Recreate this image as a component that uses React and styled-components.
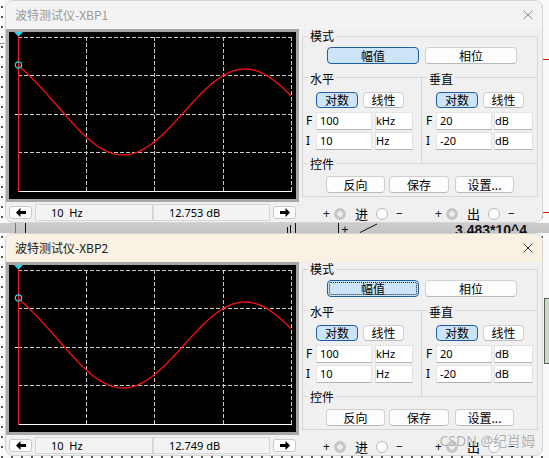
import React from "react";
import styled, { createGlobalStyle } from "styled-components";

const UI = `"Noto Sans", "Noto Sans CJK SC", sans-serif`;
const CJK = `"Noto Sans CJK SC", "Noto Sans", sans-serif`;

const GRID_X = [77, 145, 214, 282];
const GRID_Y = [5, 43, 82, 120];

// magnitude response, roughly a sine in log-frequency with a steeper start
function response(x) {
  const base = 80 - 43 * Math.cos((Math.PI * (x + 8)) / 122);
  return base - 8 * Math.exp(-(x - 9) / 18);
}

function curvePoints() {
  const pts = [];
  for (let x = 9; x <= 282; x += 1.5) pts.push(`${x.toFixed(1)},${response(x).toFixed(2)}`);
  return pts.join(" ");
}

const CURVE = curvePoints();

const GlobalStyle = createGlobalStyle`
  html, body { margin: 0; padding: 0; }
  body { width: 549px; height: 458px; overflow: hidden; font-family: ${UI}; }
`;

const Page = styled.div`
  position: relative;
  width: 549px;
  height: 458px;
  overflow: hidden;
  background-color: #fafafa;
  background-image: radial-gradient(circle, #555 0.7px, transparent 1.1px);
  background-size: 10px 10px;
  background-position: -3px 2px;
`;

const Backdrop = styled.svg`
  position: absolute;
  left: 0;
  top: 0;
  z-index: 0;
`;

const Window = styled.div`
  position: relative;
  z-index: 1;
  box-sizing: border-box;
  width: 538px;
  height: 223px;
  margin-left: 5px;
  border: 1px solid #d4d4d4;
  border-radius: 8px;
  background: #f0f0f0;
  overflow: hidden;
`;

const TitleBar = styled.div`
  display: flex;
  align-items: center;
  justify-content: space-between;
  height: 28px;
  padding: 0 9px;
  background: ${(p) => (p.$active ? "#f9f1e2" : "#f3f3f3")};
`;

const Title = styled.span`
  font: 12px/1 ${CJK};
  color: ${(p) => (p.$active ? "#1a1a1a" : "#9a9a9a")};
`;

const Body = styled.div`
  display: flex;
`;

const LeftCol = styled.div`
  display: flex;
  flex-direction: column;
  width: 293px;
`;

const Screen = styled.div`
  height: 167px;
  border: 3px solid #a7a7a7;
  background: #000;
  line-height: 0;
`;

const ReadoutBar = styled.div`
  display: flex;
  align-items: center;
  height: 18px;
  margin-top: 1px;
  padding-left: 3px;
`;

const ArrowButton = styled.div`
  box-sizing: border-box;
  display: flex;
  align-items: center;
  justify-content: center;
  width: 23px;
  height: 13px;
  background: #fdfdfd;
  border: 1px solid #c9c9c9;
  border-radius: 3px;
  margin: ${(p) => (p.$right ? "0 0 0 3px" : "0 3px 0 0")};
`;

const Readout = styled.div`
  box-sizing: border-box;
  width: ${(p) => p.$w}px;
  height: 17px;
  padding-left: 15px;
  border: 1px solid #d6d6d6;
  background: #f3f3f3;
  font: 11px/15px ${UI};
  color: #000;
  white-space: pre;
`;

const Controls = styled.div`
  display: flex;
  flex-direction: column;
  width: 236px;
  margin-left: 3px;
`;

const GroupBox = styled.div`
  box-sizing: border-box;
  height: 161px;
  margin-top: 7px;
  border: 1px solid #d6d6d6;
  display: flex;
  flex-direction: column;
`;

const ModeSection = styled.div`
  display: flex;
  flex-direction: column;
  height: 40px;
`;

const AxisSection = styled.div`
  display: flex;
  height: 85px;
  border-top: 1px solid #d6d6d6;
`;

const Half = styled.div`
  box-sizing: border-box;
  display: flex;
  flex-direction: column;
  width: ${(p) => (p.$divider ? "119px" : "auto")};
  flex: ${(p) => (p.$divider ? "none" : "1")};
  border-right: ${(p) => (p.$divider ? "1px solid #d6d6d6" : "none")};
`;

const CtrlSection = styled.div`
  display: flex;
  flex-direction: column;
  height: 32px;
  border-top: 1px solid #d6d6d6;
`;

const Legend = styled.span`
  align-self: flex-start;
  margin: ${(p) => p.$top}px 0 0 5px;
  padding: 0 2px;
  background: #f0f0f0;
  font: 12px/14px ${CJK};
  color: #000;
`;

const ButtonRow = styled.div`
  display: flex;
  gap: ${(p) => p.$gap}px;
  margin-top: ${(p) => p.$top}px;
  padding-left: ${(p) => p.$pad}px;
`;

const Btn = styled.button`
  box-sizing: border-box;
  width: ${(p) => p.$w}px;
  height: ${(p) => p.$h || 17}px;
  margin: 0;
  margin-left: ${(p) => p.$ml || 0}px;
  padding: 0;
  font: 12px/1 ${CJK};
  color: #000;
  background: ${(p) => (p.$on ? "#cce4f7" : "#fdfdfd")};
  border: 1px solid ${(p) => (p.$on ? "#1f5ea6" : "#d0d0d0")};
  border-bottom-color: ${(p) => (p.$on ? "#1f5ea6" : "#bababa")};
  border-radius: 4px;
  ${(p) => p.$focus && "outline: 1px dotted #222; outline-offset: -3px;"}
`;

const FieldRow = styled.div`
  display: flex;
  align-items: center;
  margin-top: ${(p) => p.$top}px;
  padding-left: ${(p) => p.$pad}px;
  gap: ${(p) => p.$gap}px;
`;

const FieldLabel = styled.span`
  width: 10px;
  margin-right: ${(p) => -p.$gap}px;
  font: 12px/18px ${UI};
  color: #000;
`;

const Field = styled.div`
  box-sizing: border-box;
  width: ${(p) => p.$w}px;
  height: 18px;
  padding: ${(p) => (p.$unit ? "0 0 2px" : "0")} 0 0 ${(p) => p.$pad}px;
  background: #fff;
  border: 1px solid #e3e3e3;
  border-bottom-color: #b4b4b4;
  font: 11px/16px ${UI};
  color: #000;
`;

const Terminals = styled.div`
  display: flex;
  align-items: center;
  height: 16px;
  margin-top: 9px;
  padding-left: 21px;
`;

const Term = styled.div`
  display: flex;
  align-items: center;
  margin-left: ${(p) => p.$ml || 0}px;
`;

const Sign = styled.span`
  width: 6px;
  margin-left: ${(p) => p.$ml || 0}px;
  text-align: center;
  font: 12px/16px ${UI};
  color: #111;
`;

const Port = styled.span`
  margin-left: 9px;
  font: 13px/16px ${CJK};
  color: #000;
`;

const Radio = styled.span`
  box-sizing: border-box;
  width: 12px;
  height: 12px;
  margin-left: ${(p) => p.$ml}px;
  border-radius: 50%;
  background: ${(p) =>
    p.$on ? "radial-gradient(circle, #ececec 0 2.6px, #c6c6c6 3px)" : "#fdfdfd"};
  border: 1px solid ${(p) => (p.$on ? "#c6c6c6" : "#bdbdbd")};
`;

const Strip = styled.div`
  position: relative;
  z-index: 1;
  height: 10px;
  background: linear-gradient(#cdcdcd, #c4c4c4);
  overflow: hidden;
  line-height: 0;
`;

const NodeLabel = styled.span`
  position: absolute;
  left: 455px;
  top: 0;
  font: bold 14px/14px "Liberation Sans", Arial, sans-serif;
  color: #111;
  white-space: nowrap;
`;

const Watermark = styled.span`
  position: absolute;
  right: 14px;
  bottom: 9px;
  z-index: 3;
  font: 14px/16px ${UI};
  color: rgba(150, 150, 150, 0.75);
  text-shadow: 0 0 1px rgba(255, 255, 255, 0.8);
`;

function CloseIcon({ color }) {
  return (
    <svg width="10" height="10" viewBox="0 0 10 10">
      <path d="M0.5 0.5 L9.5 9.5 M9.5 0.5 L0.5 9.5" stroke={color} strokeWidth="1" />
    </svg>
  );
}

function Arrow({ right }) {
  return (
    <svg width="10" height="9" viewBox="0 0 10 9">
      <path
        d="M0 4.5 L4.5 0 V3 H10 V6 H4.5 V9 Z"
        fill="#000"
        transform={right ? "translate(10 0) scale(-1 1)" : undefined}
      />
    </svg>
  );
}

function Scope() {
  return (
    <Screen>
      <svg width="287" height="167" viewBox="0 0 287 167">
        {GRID_Y.map((y) => (
          <line key={y} x1="9" x2="283" y1={y + 0.5} y2={y + 0.5} stroke="#c8c8c8" strokeDasharray="4 2" />
        ))}
        {GRID_X.map((x) => (
          <line key={x} x1={x + 0.5} x2={x + 0.5} y1="5" y2="159" stroke="#c8c8c8" strokeDasharray="4 2" />
        ))}
        <line x1="6" x2="10" y1="82.5" y2="82.5" stroke="#fff" />
        <line x1="9" x2="283" y1="159.5" y2="159.5" stroke="#fff" />
        <polyline points={CURVE} fill="none" stroke="#ff1010" strokeWidth="1.3" strokeLinejoin="round" />
        <line x1="9.5" x2="9.5" y1="0" y2="160" stroke="#ff1a1a" strokeWidth="1.2" />
        <path d="M5 0 H14 L9.5 4.5 Z" fill="#2ad4e6" />
        <circle cx="9.5" cy="33" r="3.2" fill="none" stroke="#2ad4e6" strokeWidth="1.2" />
      </svg>
    </Screen>
  );
}

function Bode({ title, active, gain }) {
  return (
    <Window>
      <TitleBar $active={active}>
        <Title $active={active}>{title}</Title>
        <CloseIcon color={active ? "#333" : "#8e8e8e"} />
      </TitleBar>
      <Body>
        <LeftCol>
          <Scope />
          <ReadoutBar>
            <ArrowButton>
              <Arrow />
            </ArrowButton>
            <Readout $w={118}>10  Hz</Readout>
            <Readout $w={117}>{gain}</Readout>
            <ArrowButton $right>
              <Arrow right />
            </ArrowButton>
          </ReadoutBar>
        </LeftCol>
        <Controls>
          <GroupBox>
            <ModeSection>
              <Legend $top={-8}>模式</Legend>
              <ButtonRow $top={4} $pad={24} $gap={6}>
                <Btn $w={92} $on $focus={active}>幅值</Btn>
                <Btn $w={92}>相位</Btn>
              </ButtonRow>
            </ModeSection>
            <AxisSection>
              <Half $divider>
                <Legend $top={-6}>水平</Legend>
                <ButtonRow $top={6} $pad={13} $gap={5}>
                  <Btn $w={42} $h={16} $on>对数</Btn>
                  <Btn $w={41} $h={16}>线性</Btn>
                </ButtonRow>
                <FieldRow $top={4} $pad={3} $gap={3}>
                  <FieldLabel $gap={3}>F</FieldLabel>
                  <Field $w={56} $pad={3}>100</Field>
                  <Field $w={38} $pad={2} $unit>kHz</Field>
                </FieldRow>
                <FieldRow $top={2} $pad={3} $gap={3}>
                  <FieldLabel $gap={3}>I</FieldLabel>
                  <Field $w={56} $pad={3}>10</Field>
                  <Field $w={38} $pad={6} $unit>Hz</Field>
                </FieldRow>
              </Half>
              <Half>
                <Legend $top={-6}>垂直</Legend>
                <ButtonRow $top={6} $pad={14} $gap={5}>
                  <Btn $w={42} $h={16} $on>对数</Btn>
                  <Btn $w={41} $h={16}>线性</Btn>
                </ButtonRow>
                <FieldRow $top={4} $pad={4} $gap={2}>
                  <FieldLabel $gap={2}>F</FieldLabel>
                  <Field $w={56} $pad={3}>20</Field>
                  <Field $w={39} $pad={7} $unit>dB</Field>
                </FieldRow>
                <FieldRow $top={2} $pad={4} $gap={2}>
                  <FieldLabel $gap={2}>I</FieldLabel>
                  <Field $w={56} $pad={3}>-20</Field>
                  <Field $w={39} $pad={7} $unit>dB</Field>
                </FieldRow>
              </Half>
            </AxisSection>
            <CtrlSection>
              <Legend $top={-7}>控件</Legend>
              <ButtonRow $top={5} $pad={23} $gap={4}>
                <Btn $w={59}>反向</Btn>
                <Btn $w={60}>保存</Btn>
                <Btn $w={59} $ml={2}>设置...</Btn>
              </ButtonRow>
            </CtrlSection>
          </GroupBox>
          <Terminals>
            <Term>
              <Sign>+</Sign>
              <Radio $on $ml={5} />
              <Port>进</Port>
              <Radio $ml={8} />
              <Sign $ml={8}>−</Sign>
            </Term>
            <Term $ml={33}>
              <Sign>+</Sign>
              <Radio $on $ml={5} />
              <Port>出</Port>
              <Radio $ml={8} />
              <Sign $ml={8}>−</Sign>
            </Term>
          </Terminals>
        </Controls>
      </Body>
    </Window>
  );
}

export default function App() {
  return (
    <>
      <GlobalStyle />
      <Page>
        <Backdrop width="549" height="458" viewBox="0 0 549 458">
          <line x1="0" x2="6" y1="43.5" y2="43.5" stroke="#9a9a9a" />
          <line x1="536" x2="549" y1="59.5" y2="59.5" stroke="#e01010" />
          <line x1="536" x2="549" y1="212.5" y2="212.5" stroke="#e01010" />
          <rect x="544.5" y="298.5" width="6" height="65" fill="#c9dcc4" stroke="#5a5a5a" />
        </Backdrop>
        <Bode title="波特测试仪-XBP1" gain="12.753 dB" />
        <Strip>
          <svg width="549" height="10" viewBox="0 0 549 10">
            <line x1="15.5" x2="15.5" y1="0" y2="10" stroke="#777" />
            <line x1="25.5" x2="25.5" y1="0" y2="10" stroke="#111" />
            <line x1="287.5" x2="287.5" y1="4" y2="10" stroke="#111" />
            <line x1="290.5" x2="290.5" y1="2" y2="10" stroke="#111" />
            <line x1="295.5" x2="295.5" y1="0" y2="10" stroke="#111" />
            <line x1="338.5" x2="338.5" y1="0" y2="10" stroke="#111" />
            <path d="M342 6.5 H348 M345 3.5 V9.5" stroke="#111" />
            <line x1="360" x2="377" y1="9.5" y2="1" stroke="#111" />
          </svg>
          <NodeLabel>3.483*10^4</NodeLabel>
        </Strip>
        <Bode title="波特测试仪-XBP2" gain="12.749 dB" active />
        <Watermark>CSDN @纪肖姆</Watermark>
      </Page>
    </>
  );
}
